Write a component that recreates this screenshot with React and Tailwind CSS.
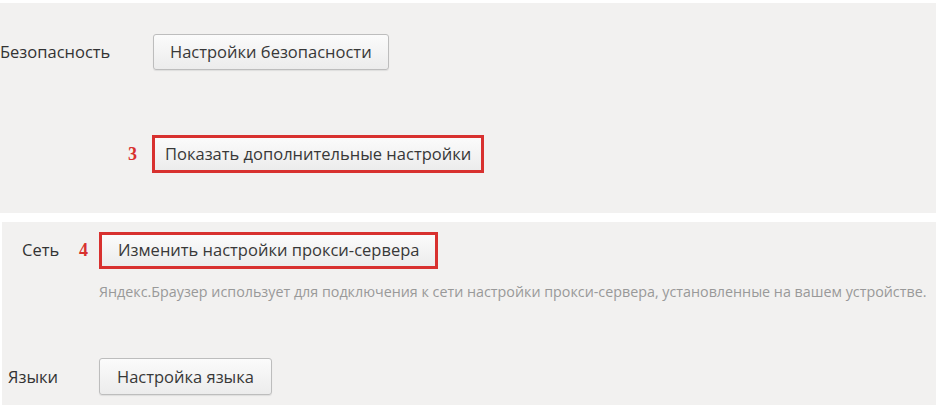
import React from "react";

const font = { fontFamily: '"Open Sans", "Noto Sans", sans-serif' };

function Btn({ children, marked = false, className = "" }) {
  return (
    <button
      className={
        "flex items-center rounded-[3px] bg-gradient-to-b from-[#fbfbfb] to-[#ececec] text-[16.5px] text-[#383838] " +
        (marked
          ? "border-[3px] border-[#d8312f] rounded-none "
          : "border border-[#bdbdbd] shadow-[0_1px_1px_rgba(0,0,0,0.08)] ") +
        className
      }
    >
      {children}
    </button>
  );
}

function Mark({ n }) {
  return (
    <span className="font-bold text-[18px] text-[#d8312f]" style={{ fontFamily: '"Liberation Serif", serif' }}>
      {n}
    </span>
  );
}

export default function App() {
  return (
    <div className="w-[938px] h-[410px] bg-white overflow-hidden" style={font}>
      <div className="mt-[3px] h-[210px] w-[936px] bg-[#f2f1f0]">
        <div className="flex items-center pt-[31px]">
          <div className="w-[153px] text-[16.5px] text-[#333]">Безопасность</div>
          <Btn className="h-[36px] px-[16px]">Настройки безопасности</Btn>
        </div>
        <div className="mt-[65px] flex items-center">
          <div className="flex w-[152px] justify-end pr-[15px]">
            <Mark n="3" />
          </div>
          <Btn marked className="h-[38px] px-[10px]">Показать дополнительные настройки</Btn>
        </div>
      </div>

      <div className="mt-[9px] ml-[2px] h-[183px] w-[934px] bg-[#f2f1f0]">
        <div className="flex items-center pt-[10px]">
          <div className="ml-[20px] w-[57px] text-[16.5px] text-[#333]">Сеть</div>
          <Mark n="4" />
          <Btn marked className="ml-[11px] h-[37px] px-[16px]">Изменить настройки прокси-сервера</Btn>
        </div>
        <div className="mt-[12px] ml-[97px] text-[14.3px] text-[#999] whitespace-nowrap">
          Яндекс.Браузер использует для подключения к сети настройки прокси-сервера, установленные на вашем устройстве.
        </div>
        <div className="mt-[56px] flex items-center">
          <div className="ml-[6px] w-[91px] text-[16.5px] text-[#333]">Языки</div>
          <Btn className="h-[37px] px-[17px]">Настройка языка</Btn>
        </div>
      </div>
    </div>
  );
}
